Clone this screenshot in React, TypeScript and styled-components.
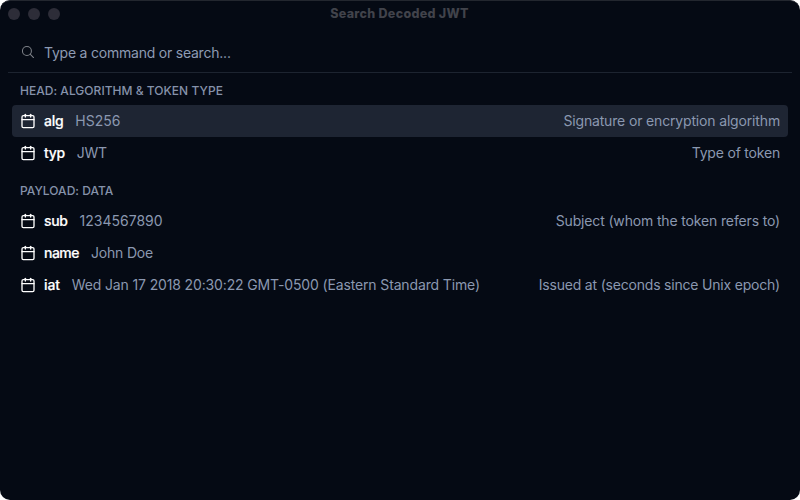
import React from 'react';
import styled, { createGlobalStyle } from 'styled-components';
import { Calendar } from 'lucide-react';

const GlobalStyle = createGlobalStyle`
  * { box-sizing: border-box; }
  body { margin: 0; background: #fff; font-family: Inter, sans-serif; }
`;

const Window = styled.main`
  width: 800px;
  height: 500px;
  overflow: hidden;
  border-radius: 10px;
  background: #050a14;
  color: #fff;
  border-top: 1px solid #23272f;
`;

const TitleBar = styled.header`
  height: 27px;
  padding-bottom: 1px;
  display: grid;
  grid-template-columns: 100px 1fr 100px;
  align-items: center;
`;

const Lights = styled.div`
  display: flex;
  gap: 8px;
  padding-left: 8px;
`;

const Light = styled.span`
  width: 12px;
  height: 12px;
  border-radius: 50%;
  background: #2d2d38;
`;

const Title = styled.h1`
  margin: 0;
  text-align: center;
  font-size: 12.5px;
  font-weight: 800;
  line-height: 16px;
  letter-spacing: 0.3px;
  text-indent: -1px;
  color: #41434b;
`;

const SearchBar = styled.div`
  height: 45px;
  margin: 0 8px;
  padding: 6px 12px 0;
  display: flex;
  align-items: center;
  border-bottom: 1px solid #1d2430;
  color: #8d9bb3;
`;

const SearchIcon = styled.svg`
  width: 16px;
  height: 16px;
  margin-bottom: 2px;
  fill: none;
  stroke: #7d8087;
  stroke-linecap: round;
`;

const Prompt = styled.span`
  margin-left: 8px;
  font-size: 14px;
  line-height: 20px;
  letter-spacing: -0.22px;
`;

const Group = styled.section`
  padding: 0 12px 4px;
`;

const Heading = styled.h2`
  height: 32px;
  margin: 0;
  padding: 10px 8px 0;
  font-size: 12px;
  line-height: 16px;
  font-weight: 500;
  letter-spacing: 0.03px;
  color: #8592aa;
`;

const Row = styled.div<{ $active?: boolean }>`
  height: 32px;
  padding: 0 8px;
  display: flex;
  align-items: center;
  border-radius: 4px;
  font-size: 14px;
  line-height: 20px;
  white-space: nowrap;
  color: #8b98b0;
  background: ${(p) => (p.$active ? '#1e2533' : 'transparent')};
`;

const Name = styled.strong<{ $tracking?: number }>`
  margin: 0 12px 0 8px;
  font-weight: 500;
  letter-spacing: ${(p) => p.$tracking ?? -0.3}px;
  color: #fff;
  -webkit-text-stroke: 0.2px #fff;
`;

const Value = styled.span<{ $tracking?: number }>`
  letter-spacing: ${(p) => p.$tracking ?? 0}px;
`;

const Description = styled.span<{ $tracking?: number }>`
  margin-left: auto;
  letter-spacing: ${(p) => p.$tracking ?? -0.16}px;
`;

interface Claim {
  name: string;
  value: string;
  description?: string;
  active?: boolean;
  nameTracking?: number;
  tracking?: number;
  descriptionTracking?: number;
}

const groups: { title: string; rows: Claim[] }[] = [
  {
    title: 'HEAD: ALGORITHM & TOKEN TYPE',
    rows: [
      { name: 'alg', value: 'HS256', description: 'Signature or encryption algorithm', active: true },
      { name: 'typ', value: 'JWT', description: 'Type of token', nameTracking: -0.35, tracking: -0.25, descriptionTracking: -0.2 },
    ],
  },
  {
    title: 'PAYLOAD: DATA',
    rows: [
      { name: 'sub', value: '1234567890', description: 'Subject (whom the token refers to)', nameTracking: -0.35, descriptionTracking: -0.15 },
      { name: 'name', value: 'John Doe', nameTracking: -0.5, tracking: -0.2 },
      {
        name: 'iat',
        value: 'Wed Jan 17 2018 20:30:22 GMT-0500 (Eastern Standard Time)',
        description: 'Issued at (seconds since Unix epoch)',
        nameTracking: -0.15,
        tracking: -0.14,
        descriptionTracking: -0.2,
      },
    ],
  },
];

export default function App() {
  return (
    <>
      <GlobalStyle />
      <Window>
        <TitleBar>
          <Lights><Light /><Light /><Light /></Lights>
          <Title>Search Decoded JWT</Title>
        </TitleBar>
        <SearchBar>
          <SearchIcon viewBox="0 0 15 15" aria-hidden="true">
            <circle cx="6.5" cy="6.5" r="4.2" />
            <path d="m9.5 9.5 3.2 3.2" />
          </SearchIcon>
          <Prompt>Type a command or search...</Prompt>
        </SearchBar>
        {groups.map((group) => (
          <Group key={group.title}>
            <Heading>{group.title}</Heading>
            {group.rows.map((row) => (
              <Row key={row.name} $active={row.active}>
                <Calendar size={16} color="#fff" />
                <Name $tracking={row.nameTracking}>{row.name}</Name>
                <Value $tracking={row.tracking}>{row.value}</Value>
                {row.description && (
                  <Description $tracking={row.descriptionTracking}>{row.description}</Description>
                )}
              </Row>
            ))}
          </Group>
        ))}
      </Window>
    </>
  );
}
